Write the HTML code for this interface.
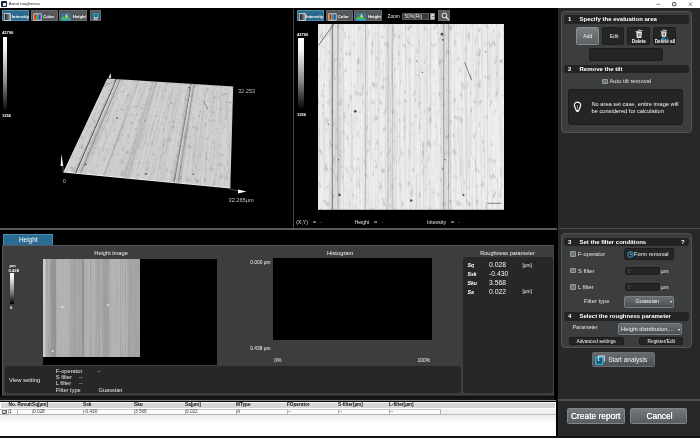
<!DOCTYPE html>
<html lang="en">
<head>
<meta charset="utf-8">
<title>Areal roughness</title>
<style>
*{box-sizing:border-box;margin:0;padding:0}
html,body{width:700px;height:438px;overflow:hidden;background:#000}
body{position:relative;font-family:"Liberation Sans",sans-serif;color:#e6e6e6;font-size:5.5px;line-height:1}
#wrap{position:absolute;left:0;top:0;width:700px;height:438px;will-change:transform}
.a{position:absolute}
.t{position:absolute;white-space:nowrap}
#titlebar{left:0;top:0;width:700px;height:8.3px;background:#fff;color:#333}
.tb{position:absolute;top:10.4px;height:11px;border-radius:0.5px;background:#53575a;border:0.5px solid #666a6c;color:#fff;font-size:4.2px;font-weight:bold}
.tb.sel{background:#2c6a8c;border-color:#4d8fb0}
.tb span{position:absolute;top:3.3px}
#rp{left:557.6px;top:8.3px;width:142.4px;height:430px;background:#282828}
.box{position:absolute;background:#3b3d3e;border:1px solid #515354;border-radius:4px}
.hd{position:absolute;background:#222324;border-radius:3px;height:8.5px;color:#fff;font-weight:bold;font-size:6px}
.hd span{position:absolute;top:1.1px}
.dk{position:absolute;background:#242525;border-radius:2px;border:0.5px solid #1d1d1d}
.btn{position:absolute;border-radius:1.5px;background:linear-gradient(#6a6f71,#4b4f51);border:0.5px solid #7c8082;color:#f2f2f2;text-align:center}
.cb{position:absolute;width:5.5px;height:5.5px;background:#727576;border:0.5px solid #9a9d9e;border-radius:1px}
.lbl{position:absolute;white-space:nowrap;color:#e4e4e4;font-size:5.8px}
</style>
</head>
<body>
<div id="wrap">
<!-- title bar -->
<div id="titlebar" class="a">
  <div class="a" style="left:1px;top:1px;width:6px;height:6px;background:#16223f;border-radius:1px"></div>
  <div class="a" style="left:3px;top:3px;width:3px;height:3px;background:#e8eef8"></div>
  <div class="t" style="left:8.8px;top:1.7px;font-size:4.3px;color:#222">Areal roughness</div>
  <svg class="a" style="left:650px;top:0" width="50" height="8.6" viewBox="0 0 50 8.6"><line x1="6.5" y1="4.3" x2="10" y2="4.3" stroke="#555" stroke-width="0.7"/><rect x="22.6" y="2.6" width="3.2" height="3.2" rx="0.6" fill="none" stroke="#333" stroke-width="0.9"/><path d="M38.8 2.5 L42.2 5.9 M42.2 2.5 L38.8 5.9" stroke="#444" stroke-width="0.7" fill="none"/></svg>
</div>

<!-- vertical divider between 3D and 2D panes -->
<div class="a" style="left:292.5px;top:9px;width:1.5px;height:219px;background:#444"></div>
<!-- horizontal divider under panes -->
<div class="a" style="left:0;top:228.4px;width:557px;height:1.8px;background:#5a5a5a"></div>

<svg class="a" style="left:317.7px;top:24.2px" width="186.4" height="185.8" preserveAspectRatio="none" viewBox="0 0 187 186">
<defs><filter id="nz" x="0" y="0" width="100%" height="100%"><feTurbulence type="fractalNoise" baseFrequency="0.55 0.012" numOctaves="3" seed="3"/><feColorMatrix type="matrix" values="0 0 0 0 0  0 0 0 0 0  0 0 0 0 0  0.2 0 0 0 -0.08"/></filter><filter id="nz2" x="0" y="0" width="100%" height="100%"><feTurbulence type="fractalNoise" baseFrequency="0.28 0.12" numOctaves="2" seed="11"/><feColorMatrix type="matrix" values="0 0 0 0 0  0 0 0 0 0  0 0 0 0 0  0.65 0 0 0 -0.39"/></filter></defs>
<g id="im2d">
<rect width="187" height="186" fill="#efefef"/>
<rect width="187" height="186" filter="url(#nz)"/>
<rect width="187" height="186" filter="url(#nz2)"/>
<rect x="11.2" y="0" width="12.2" height="186" fill="#000" fill-opacity="0.060"/>
<rect x="67.3" y="0" width="10.3" height="186" fill="#000" fill-opacity="0.045"/>
<rect x="122.5" y="0" width="11.2" height="186" fill="#000" fill-opacity="0.060"/>
<rect x="44.9" y="0" width="5.6" height="186" fill="#000" fill-opacity="0.030"/>
<rect x="13.8" y="0" width="1.1" height="186" fill="#000" fill-opacity="0.42"/>
<rect x="19.5" y="0" width="1.0" height="186" fill="#000" fill-opacity="0.22"/>
<rect x="24.8" y="0" width="0.8" height="186" fill="#000" fill-opacity="0.10"/>
<rect x="47.3" y="0" width="0.8" height="186" fill="#000" fill-opacity="0.16"/>
<rect x="69.7" y="0" width="0.9" height="186" fill="#000" fill-opacity="0.16"/>
<rect x="74.4" y="0" width="0.8" height="186" fill="#000" fill-opacity="0.14"/>
<rect x="111.9" y="0" width="0.7" height="186" fill="#000" fill-opacity="0.10"/>
<rect x="125.7" y="0" width="1.0" height="186" fill="#000" fill-opacity="0.28"/>
<rect x="130.5" y="0" width="0.9" height="186" fill="#000" fill-opacity="0.22"/>
<rect x="148.3" y="0" width="0.7" height="186" fill="#000" fill-opacity="0.08"/>
<rect x="169.8" y="0" width="0.7" height="186" fill="#000" fill-opacity="0.08"/>
<rect x="33.4" y="0" width="0.6" height="186" fill="#000" fill-opacity="0.07"/>
<rect x="57.7" y="0" width="0.6" height="186" fill="#000" fill-opacity="0.07"/>
<rect x="87.6" y="0" width="0.6" height="186" fill="#000" fill-opacity="0.07"/>
<rect x="98.8" y="0" width="0.6" height="186" fill="#000" fill-opacity="0.06"/>
<rect x="158.6" y="0" width="0.6" height="186" fill="#000" fill-opacity="0.06"/>
<rect x="60.6" y="0" width="0.6" height="186" fill="#000" fill-opacity="0.05"/>
<rect x="9.0" y="0" width="0.6" height="186" fill="#000" fill-opacity="0.03"/>
<rect x="109.0" y="0" width="0.6" height="186" fill="#000" fill-opacity="0.04"/>
<rect x="16.1" y="0" width="0.6" height="186" fill="#fff" fill-opacity="0.03"/>
<rect x="17.0" y="0" width="0.6" height="186" fill="#fff" fill-opacity="0.03"/>
<rect x="105.7" y="0" width="0.6" height="186" fill="#000" fill-opacity="0.06"/>
<rect x="109.0" y="0" width="0.6" height="186" fill="#000" fill-opacity="0.06"/>
<rect x="74.2" y="0" width="0.6" height="186" fill="#000" fill-opacity="0.03"/>
<rect x="160.5" y="0" width="0.6" height="186" fill="#fff" fill-opacity="0.05"/>
<rect x="101.1" y="0" width="0.6" height="186" fill="#000" fill-opacity="0.05"/>
<rect x="152.6" y="0" width="0.6" height="186" fill="#000" fill-opacity="0.04"/>
<rect x="106.8" y="0" width="0.6" height="186" fill="#000" fill-opacity="0.05"/>
<rect x="102.4" y="0" width="0.6" height="186" fill="#000" fill-opacity="0.06"/>
<rect x="115.8" y="0" width="0.6" height="186" fill="#fff" fill-opacity="0.06"/>
<rect x="80.0" y="0" width="0.6" height="186" fill="#fff" fill-opacity="0.05"/>
<rect x="172.7" y="0" width="0.6" height="186" fill="#fff" fill-opacity="0.04"/>
<rect x="148.5" y="0" width="0.6" height="186" fill="#000" fill-opacity="0.07"/>
<rect x="15.3" y="0" width="0.6" height="186" fill="#fff" fill-opacity="0.06"/>
<rect x="163.7" y="0" width="0.6" height="186" fill="#000" fill-opacity="0.05"/>
<rect x="113.9" y="0" width="0.6" height="186" fill="#000" fill-opacity="0.04"/>
<rect x="78.2" y="0" width="0.6" height="186" fill="#fff" fill-opacity="0.04"/>
<rect x="91.4" y="0" width="0.6" height="186" fill="#000" fill-opacity="0.08"/>
<rect x="14.5" y="0" width="0.6" height="186" fill="#000" fill-opacity="0.06"/>
<rect x="163.7" y="0" width="0.6" height="186" fill="#fff" fill-opacity="0.05"/>
<circle cx="37.4" cy="87.4" r="1.4" fill="#222" fill-opacity="0.75"/>
<circle cx="10.3" cy="100.4" r="0.7" fill="#222" fill-opacity="0.75"/>
<circle cx="21.5" cy="171.1" r="1.3" fill="#222" fill-opacity="0.75"/>
<circle cx="93.5" cy="176.7" r="1.2" fill="#222" fill-opacity="0.75"/>
<circle cx="124.4" cy="10.2" r="1.4" fill="#222" fill-opacity="0.75"/>
<circle cx="125.3" cy="15.8" r="0.9" fill="#222" fill-opacity="0.75"/>
<circle cx="145.9" cy="171.1" r="1.0" fill="#222" fill-opacity="0.75"/>
<circle cx="168.3" cy="27.9" r="0.7" fill="#222" fill-opacity="0.75"/>
<circle cx="99.1" cy="37.2" r="0.6" fill="#222" fill-opacity="0.75"/>
<circle cx="104.7" cy="48.4" r="0.6" fill="#222" fill-opacity="0.75"/>
<circle cx="127.2" cy="135.8" r="0.7" fill="#222" fill-opacity="0.75"/>
<circle cx="125.3" cy="145.1" r="0.6" fill="#222" fill-opacity="0.75"/>
<circle cx="183.3" cy="37.2" r="0.6" fill="#222" fill-opacity="0.75"/>
<circle cx="20.6" cy="135.8" r="0.6" fill="#222" fill-opacity="0.75"/>
<line x1="0" y1="22" x2="16" y2="0" stroke="#444" stroke-width="0.7"/>
<line x1="147" y1="38" x2="154" y2="56" stroke="#666" stroke-width="0.8"/>
</g>
<line x1="170" y1="179.5" x2="184" y2="179.5" stroke="#333" stroke-width="0.6"/>
</svg>
<div class="a" style="left:0;top:0;width:187px;height:186px;transform-origin:0 0;transform:matrix3d(0.623252,0.024765,0,-0.00021445, -0.321110,0.276200,0,-0.00132933, 0,0,1,0, 107.3000,78.4000,0,1)"><svg class="a" style="left:0;top:0" width="187" height="186" viewBox="0 0 187 186"><use href="#im2d"/><rect width="187" height="186" fill="#000" fill-opacity="0.115"/><rect x="13.8" y="0" width="1.1" height="186" fill="#000" fill-opacity="0.46"/><rect x="15.1" y="0" width="1.0" height="186" fill="#fff" fill-opacity="0.60"/><rect x="19.5" y="0" width="1.0" height="186" fill="#000" fill-opacity="0.24"/><rect x="20.7" y="0" width="0.9" height="186" fill="#fff" fill-opacity="0.35"/><rect x="125.7" y="0" width="1.0" height="186" fill="#000" fill-opacity="0.31"/><rect x="126.9" y="0" width="0.9" height="186" fill="#fff" fill-opacity="0.45"/><rect x="130.5" y="0" width="0.9" height="186" fill="#000" fill-opacity="0.24"/><rect x="131.5" y="0" width="0.8" height="186" fill="#fff" fill-opacity="0.35"/><rect x="0" y="184.8" width="187" height="1.2" fill="#fff" fill-opacity="0.8"/><rect x="0" y="0" width="1" height="186" fill="#fff" fill-opacity="0.6"/></svg></div>
<svg class="a" style="left:0;top:9px" width="292" height="219" viewBox="0 9 292 219">
<polygon points="61.5,154 63.2,166 60.6,166" fill="#fff"/><line x1="62.6" y1="165" x2="63.2" y2="172" stroke="#bbb" stroke-width="0.5"/>
<polygon points="246.5,191.6 238,189.6 238,193.6" fill="#fff"/><line x1="230" y1="189" x2="239" y2="191.4" stroke="#999" stroke-width="0.5"/>
<polygon points="111,73 108.5,77.6 110.8,78.2" fill="#fff"/>
<text x="238" y="93.2" font-size="5.6" fill="#bdbdbd" font-family="Liberation Sans, sans-serif">32.253</text>
<text x="62.7" y="183" font-size="5.6" fill="#bdbdbd" font-family="Liberation Sans, sans-serif">0</text>
<text x="228.6" y="202" font-size="5.6" fill="#c8c8c8" font-family="Liberation Sans, sans-serif">32.265µm</text>
</svg>
<!-- left toolbar -->
<div class="tb sel" style="left:2.3px;width:27px">
  <svg class="a" style="left:1px;top:1.5px" width="7" height="8" viewBox="0 0 8 8" preserveAspectRatio="none"><defs><linearGradient id="gi" x1="0" x2="1"><stop offset="0" stop-color="#111"/><stop offset="1" stop-color="#aaa"/></linearGradient></defs><rect x="0.5" y="0.5" width="7" height="7" fill="url(#gi)" stroke="#ddd" stroke-width="0.8"/></svg>
  <span style="left:8.4px">Intensity</span></div>
<div class="tb" style="left:31px;width:27px">
  <svg class="a" style="left:1px;top:1.5px" width="9" height="8" viewBox="0 0 9 8"><rect x="0.5" y="0.5" width="8" height="7" fill="#fff"/><rect x="1.2" y="1.2" width="2.2" height="5.6" fill="#d22"/><rect x="3.4" y="1.2" width="2.2" height="5.6" fill="#2a2"/><rect x="5.6" y="1.2" width="2.2" height="5.6" fill="#24c"/></svg>
  <span style="left:11.3px">Color</span></div>
<div class="tb" style="left:59px;width:28px">
  <svg class="a" style="left:1px;top:1.5px" width="10" height="8" viewBox="0 0 10 8"><rect x="0" y="0" width="10" height="8" fill="#3f6f9f"/><rect x="0" y="5.6" width="10" height="2.4" fill="#2b8fd8"/><polygon points="0,6 2.5,3 4,5 5.5,0.6 7.5,5 10,6 10,6.6 0,6.6" fill="#4fc04e"/><polygon points="4.3,4 5.5,0.6 6.8,4" fill="#f4e63c"/></svg>
  <span style="left:12.9px">Height</span></div>
<div class="tb" style="left:89.7px;width:11.8px">
  <div class="a" style="left:2.4px;top:1.6px;width:5.8px;height:4.9px;background:#2a94b8;border-radius:1px"></div>
  <div class="a" style="left:4px;top:2.8px;width:2.6px;height:2.6px;background:#176a88;border-radius:0.6px"></div>
  <span style="left:2.9px;top:7px;font-size:3.3px;line-height:1">3D</span>
</div>
<!-- left colour scale -->
<div class="t" style="left:2px;top:30.5px;font-size:4.1px;font-weight:bold;color:#fff">42790</div>
<div class="a" style="left:2.5px;top:37px;width:4.5px;height:74px;background:linear-gradient(#fff,#f2f2f2 18%,#8a8a8a 60%,#111 96%,#000)"></div>
<div class="t" style="left:2px;top:113.5px;font-size:4.1px;font-weight:bold;color:#fff">1256</div>

<!-- right toolbar -->
<div class="tb sel" style="left:296.6px;width:27px">
  <svg class="a" style="left:1px;top:1.5px" width="7" height="8" viewBox="0 0 8 8" preserveAspectRatio="none"><rect x="0.5" y="0.5" width="7" height="7" fill="url(#gi)" stroke="#ddd" stroke-width="0.8"/></svg>
  <span style="left:8.4px">Intensity</span></div>
<div class="tb" style="left:325.5px;width:27px">
  <svg class="a" style="left:1px;top:1.5px" width="9" height="8" viewBox="0 0 9 8"><rect x="0.5" y="0.5" width="8" height="7" fill="#fff"/><rect x="1.2" y="1.2" width="2.2" height="5.6" fill="#d22"/><rect x="3.4" y="1.2" width="2.2" height="5.6" fill="#2a2"/><rect x="5.6" y="1.2" width="2.2" height="5.6" fill="#24c"/></svg>
  <span style="left:11.3px">Color</span></div>
<div class="tb" style="left:354px;width:28px">
  <svg class="a" style="left:1px;top:1.5px" width="10" height="8" viewBox="0 0 10 8"><rect x="0" y="0" width="10" height="8" fill="#3f6f9f"/><rect x="0" y="5.6" width="10" height="2.4" fill="#2b8fd8"/><polygon points="0,6 2.5,3 4,5 5.5,0.6 7.5,5 10,6 10,6.6 0,6.6" fill="#4fc04e"/><polygon points="4.3,4 5.5,0.6 6.8,4" fill="#f4e63c"/></svg>
  <span style="left:12.9px">Height</span></div>
<div class="t" style="left:387.5px;top:14.6px;font-size:4.8px;color:#e6e6e6">Zoom</div>
<div class="a" style="left:402px;top:12.5px;width:27px;height:7px;background:#38393a;border:0.5px solid #5a5a5a;color:#f4f4f4;font-size:4.7px"><span class="t" style="left:1.5px;top:1px">50%(Fit)</span></div>
<div class="a" style="left:430px;top:12.5px;width:5px;height:7px;background:#cfd3d6;border:0.5px solid #888"><div class="a" style="left:0.8px;top:2.4px;border-left:1.4px solid transparent;border-right:1.4px solid transparent;border-top:1.8px solid #222"></div></div>
<div class="tb" style="left:438px;width:11.5px">
  <svg class="a" style="left:1.5px;top:1px" width="8.5" height="8.5" viewBox="0 0 8.5 8.5"><circle cx="3.4" cy="3.4" r="2.4" fill="none" stroke="#f2f2f2" stroke-width="1"/><line x1="5.2" y1="5.2" x2="7.8" y2="7.8" stroke="#f2f2f2" stroke-width="1.2"/></svg>
</div>
<!-- right colour scale -->
<div class="t" style="left:297px;top:33.3px;font-size:4.1px;font-weight:bold;color:#fff">42790</div>
<div class="a" style="left:298px;top:38px;width:5.5px;height:71px;background:linear-gradient(#fff,#f2f2f2 18%,#8a8a8a 60%,#111 96%,#000)"></div>
<div class="t" style="left:297px;top:112.5px;font-size:4.1px;font-weight:bold;color:#fff">1256</div>
<!-- status row -->
<div class="t" style="left:296.3px;top:219.6px;font-size:5.1px;color:#e6e6e6">(X,Y)<span style="margin-left:5px">=</span><span style="margin-left:4.5px;color:#888">-</span></div>
<div class="t" style="left:354.5px;top:219.6px;font-size:5.1px;color:#e6e6e6">Height<span style="margin-left:5px">=</span><span style="margin-left:4.5px;color:#888">-</span></div>
<div class="t" style="left:427px;top:219.6px;font-size:5.1px;color:#e6e6e6">Intensity<span style="margin-left:5px">=</span><span style="margin-left:4.5px;color:#888">-</span></div>

<!-- right settings panel -->
<div class="a" id="rp"></div>
<div class="a" style="left:557.6px;top:227.6px;width:142.4px;height:1.5px;background:#484848"></div>
<div class="a" style="left:557.6px;top:399px;width:142.4px;height:1.5px;background:#4c4c4c"></div>

<!-- box 1/2 -->
<div class="box" style="left:560.5px;top:10.5px;width:131.5px;height:122px"></div>
<div class="hd" style="left:564px;top:15px;width:124.5px"><span style="left:4px">1</span><span style="left:15.5px">Specify the evaluation area</span></div>
<div class="btn" style="left:576px;top:26.5px;width:22.5px;height:18.5px;background:linear-gradient(#7a8082,#5c6163);border-color:#8a8e8f"><span class="t" style="left:6.3px;top:6.8px;font-size:5px">Add</span></div>
<div class="dk" style="left:601.5px;top:26.5px;width:22.5px;height:18.5px"><span class="t" style="left:7.3px;top:6.8px;font-size:5px;color:#eee">Edit</span></div>
<div class="dk" style="left:627px;top:26.5px;width:23px;height:18.5px">
  <svg class="a" style="left:7.3px;top:1.8px" width="8" height="9.5" viewBox="0 0 8 9.5"><path d="M1.3 2.8 H6.9 L6.4 9 H1.8 Z" fill="#ececec"/><path d="M0.6 2.2 L7.2 1.1 L7.35 1.9 L0.75 3 Z" fill="#ececec"/><path d="M3 0.9 L5 0.55 L5.1 1.2 L3.1 1.55 Z" fill="#ececec"/><rect x="2.9" y="4" width="0.7" height="3.8" fill="#3a3a3a"/><rect x="4.6" y="4" width="0.7" height="3.8" fill="#3a3a3a"/></svg>
  <span class="t" style="left:3.8px;top:12.6px;font-size:4.7px;font-weight:bold;color:#f2f2f2">Delete</span></div>
<div class="dk" style="left:653px;top:26.5px;width:22.5px;height:18.5px">
  <svg class="a" style="left:6.3px;top:1px" width="10" height="11.5" viewBox="0 0 10 11.5"><g transform="scale(0.95 0.86)"><path d="M1.3 2.8 H6.9 L6.4 9 H1.8 Z" fill="#ececec"/><path d="M0.6 2.2 L7.2 1.1 L7.35 1.9 L0.75 3 Z" fill="#ececec"/><path d="M3 0.9 L5 0.55 L5.1 1.2 L3.1 1.55 Z" fill="#ececec"/><rect x="2.9" y="4" width="0.7" height="3.8" fill="#3a3a3a"/><rect x="4.6" y="4" width="0.7" height="3.8" fill="#3a3a3a"/></g><text x="1.6" y="10.7" font-size="3.7" font-weight="bold" fill="#2fb4e8" font-family="Liberation Sans, sans-serif">ALL</text></svg>
  <span class="t" style="left:0.7px;top:12.6px;font-size:4.7px;font-weight:bold;color:#f2f2f2">Delete all</span></div>
<div class="dk" style="left:588.5px;top:48px;width:74.5px;height:12.5px"></div>
<div class="hd" style="left:564px;top:64.5px;width:124.5px"><span style="left:4px">2</span><span style="left:15.5px">Remove the tilt</span></div>
<div class="cb" style="left:602px;top:78.5px"></div>
<div class="lbl" style="left:609.5px;top:79.4px">Auto tilt removal</div>
<div class="dk" style="left:568px;top:88.7px;width:115px;height:36px;border-radius:3px"></div>
<svg class="a" style="left:572.8px;top:101.3px" width="9" height="12" viewBox="0 0 9 12"><path d="M4.5 1.1 A3.2 3.2 0 0 0 1.9 6.1 L3.3 9.6 L5.7 9.6 L7.1 6.1 A3.2 3.2 0 0 0 4.5 1.1 Z" fill="none" stroke="#f4f4f4" stroke-width="1.25" stroke-linejoin="round"/><path d="M3.4 10.4 H5.6" stroke="#f4f4f4" stroke-width="1.1"/><path d="M4.5 4.2 V7.6" stroke="#cfcfcf" stroke-width="0.6"/></svg>
<div class="lbl" style="left:591.5px;top:101.9px;font-size:5.7px;color:#f0f0f0">No area set case, entire image will</div>
<div class="lbl" style="left:591.5px;top:108.9px;font-size:5.7px;color:#f0f0f0">be considered for calculation</div>

<!-- box 3/4 -->
<div class="box" style="left:560.5px;top:232.5px;width:131.5px;height:115px"></div>
<div class="hd" style="left:564px;top:237.5px;width:124.5px"><span style="left:4px">3</span><span style="left:15.5px">Set the filter conditions</span><span style="left:117px">?</span></div>
<div class="cb" style="left:570px;top:251px"></div>
<div class="lbl" style="left:578px;top:251.9px">F-operator</div>
<div class="dk" style="left:623.5px;top:248.1px;width:50.5px;height:12px">
  <svg class="a" style="left:2px;top:1.8px" width="7" height="7" viewBox="0 0 7 7"><circle cx="3.5" cy="3.5" r="2.7" fill="none" stroke="#2fa6dc" stroke-width="1"/><path d="M3.5 1.8 V3.6 H5" fill="none" stroke="#9bd4ee" stroke-width="0.7"/></svg>
  <span class="t" style="left:9.6px;top:2.6px;font-size:5.6px;color:#f0f0f0">Form removal</span></div>
<div class="cb" style="left:570px;top:267.5px"></div>
<div class="lbl" style="left:578px;top:269.1px">S filter</div>
<div class="dk" style="left:625px;top:266.5px;width:34.5px;height:8.5px"><span class="t" style="left:1.5px;top:1.4px;font-size:5px;color:#555">0</span></div>
<div class="lbl" style="left:660.5px;top:269.1px">µm</div>
<div class="cb" style="left:570px;top:284px"></div>
<div class="lbl" style="left:578px;top:284.9px">L filter</div>
<div class="dk" style="left:625px;top:282.5px;width:34.5px;height:8.5px"><span class="t" style="left:1.5px;top:1.4px;font-size:5px;color:#555">0</span></div>
<div class="lbl" style="left:660.5px;top:284.9px">µm</div>
<div class="lbl" style="left:584px;top:298.9px">Filter type</div>
<div class="btn" style="left:624px;top:296px;width:50px;height:11.5px"><span class="t" style="left:10.5px;top:2.4px;font-size:5.6px">Guassian</span><div class="a" style="left:44.5px;top:4.2px;border-left:1.5px solid transparent;border-right:1.5px solid transparent;border-top:2px solid #fff"></div></div>
<div class="hd" style="left:564px;top:312px;width:124.5px"><span style="left:4px">4</span><span style="left:15.5px">Select the roughness parameter</span></div>
<div class="lbl" style="left:572.5px;top:325.4px;font-size:5.4px">Parameter</div>
<div class="btn" style="left:618px;top:323px;width:64px;height:11.5px"><span class="t" style="left:2px;top:2.8px;font-size:5.8px">Height distribution,...</span><div class="a" style="left:58.5px;top:4.6px;border-left:1.5px solid transparent;border-right:1.5px solid transparent;border-top:2px solid #fff"></div></div>
<div class="dk" style="left:569px;top:337.4px;width:54.5px;height:8px"><span class="t" style="left:6.5px;top:1.3px;font-size:4.8px;color:#f0f0f0">Advanced settings</span></div>
<div class="dk" style="left:639px;top:337.4px;width:43.5px;height:8px"><span class="t" style="left:7.5px;top:1.3px;font-size:4.8px;color:#f0f0f0">Register/Edit</span></div>

<!-- start analysis -->
<div class="btn" style="left:591.7px;top:352px;width:63.8px;height:14.7px;border-color:#6c7072;background:linear-gradient(#666b6d,#4d5153)">
  <svg class="a" style="left:2.5px;top:2px" width="10" height="10" viewBox="0 0 10 10"><rect x="0.8" y="2.4" width="7" height="7" fill="#1b5570" stroke="#2fb0e0" stroke-width="1.4"/><path d="M3.4 5.4 V1 H9.3 V6.6" fill="none" stroke="#e8f6fc" stroke-width="0.9"/><rect x="3" y="4.8" width="1.2" height="1.2" fill="#fff"/></svg>
  <span class="t" style="left:15.5px;top:3.8px;font-size:6.5px">Start analysis</span></div>
<!-- bottom buttons -->
<div class="btn" style="left:567px;top:407.5px;width:57.5px;height:16px;background:linear-gradient(#74797c,#575c5e);border-color:#80858a"><span class="t" style="left:3px;top:3.4px;font-size:8.4px;color:#fff;text-shadow:0 0 0.5px #fff">Create report</span></div>
<div class="btn" style="left:629.5px;top:407.5px;width:57.5px;height:16px;background:linear-gradient(#74797c,#575c5e);border-color:#80858a"><span class="t" style="left:16px;top:3.4px;font-size:8.4px;color:#fff;text-shadow:0 0 0.5px #fff">Cancel</span></div>

<!-- lower panel -->
<div class="a" style="left:3px;top:233.6px;width:49.5px;height:11px;background:#2b6d92;border:0.5px solid #4a8db2;border-bottom:none"><span class="t" style="left:15px;top:2.2px;font-size:6.4px;color:#fff">Height</span></div>
<div class="a" style="left:2px;top:245.4px;width:551.5px;height:151px;background:#3c3d3f;border:1px solid #565859;border-bottom-color:#333;border-right-color:#444"></div>
<div class="t" style="left:94.3px;top:251.2px;font-size:5.7px;color:#f0f0f0">Height image</div>
<div class="a" style="left:43px;top:259px;width:173.5px;height:105.5px;background:#000"></div>
<!-- colour scale -->
<div class="t" style="left:9.5px;top:264.2px;font-size:4.2px;font-weight:bold;color:#fff">µm</div>
<div class="t" style="left:8.5px;top:268.7px;font-size:4.2px;font-weight:bold;color:#fff">0.438</div>
<div class="a" style="left:9.5px;top:273px;width:4.5px;height:31px;background:linear-gradient(#fff,#f0f0f0 15%,#888 60%,#111 95%,#000)"></div>
<div class="t" style="left:10px;top:306.2px;font-size:4.2px;font-weight:bold;color:#fff">0</div>
<!-- histogram -->
<div class="t" style="left:327px;top:251.2px;font-size:5.8px;color:#f0f0f0">Histogram</div>
<div class="a" style="left:273px;top:258px;width:159px;height:81.5px;background:#000"></div>
<div class="t" style="left:250.3px;top:261.3px;font-size:4.8px;color:#f4f4f4">0.000 µm</div>
<div class="t" style="left:250.3px;top:347.4px;font-size:4.8px;color:#f4f4f4">0.438 µm</div>
<div class="t" style="left:274.3px;top:358px;font-size:5px;color:#f4f4f4">0%</div>
<div class="t" style="left:417.5px;top:358px;font-size:5px;color:#f4f4f4">100%</div>
<!-- view setting -->
<div class="a" style="left:5px;top:365.5px;width:455.5px;height:27.5px;background:#262727;border-radius:3px"></div>
<div class="t" style="left:9px;top:378.4px;font-size:5.8px;color:#e8e8e8">View setting</div>
<div class="t" style="left:55.8px;top:368.6px;font-size:5.7px;color:#e8e8e8">F-operator</div><div class="t" style="left:97px;top:368.6px;font-size:5.7px;color:#bbb">--</div>
<div class="t" style="left:55.8px;top:374.9px;font-size:5.7px;color:#e8e8e8">S filter</div><div class="t" style="left:79px;top:374.9px;font-size:5.7px;color:#bbb">--</div>
<div class="t" style="left:55.8px;top:381.2px;font-size:5.7px;color:#e8e8e8">L filter</div><div class="t" style="left:79px;top:381.2px;font-size:5.7px;color:#bbb">--</div>
<div class="t" style="left:55.8px;top:387.5px;font-size:5.7px;color:#e8e8e8">Filter type</div><div class="t" style="left:98.5px;top:387.5px;font-size:5.7px;color:#e8e8e8">Guassian</div>
<!-- roughness parameter -->
<div class="t" style="left:480.3px;top:251.2px;font-size:5.5px;color:#f0f0f0">Roughness parameter</div>
<div class="a" style="left:463px;top:257px;width:89.5px;height:136px;background:#262727;border-radius:3px"></div>
<div class="t" style="left:467.5px;top:263.3px;font-size:5.2px;font-style:italic;font-weight:bold;color:#fff">Sq</div><div class="t" style="left:489px;top:262.3px;font-size:6.8px;color:#f4f4f4">0.028</div><div class="t" style="left:522.5px;top:263.5px;font-size:4.8px;color:#eee">[µm]</div>
<div class="t" style="left:467.5px;top:272px;font-size:5.2px;font-style:italic;font-weight:bold;color:#fff">Ssk</div><div class="t" style="left:489px;top:271px;font-size:6.8px;color:#f4f4f4">-0.430</div>
<div class="t" style="left:467.5px;top:280.8px;font-size:5.2px;font-style:italic;font-weight:bold;color:#fff">Sku</div><div class="t" style="left:489px;top:279.8px;font-size:6.8px;color:#f4f4f4">3.568</div>
<div class="t" style="left:467.5px;top:289.5px;font-size:5.2px;font-style:italic;font-weight:bold;color:#fff">Sa</div><div class="t" style="left:489px;top:288.5px;font-size:6.8px;color:#f4f4f4">0.022</div><div class="t" style="left:522.5px;top:289.7px;font-size:4.8px;color:#eee">[µm]</div>

<!-- result table -->
<div class="a" style="left:0;top:396.4px;width:557.6px;height:4px;background:linear-gradient(#0c0c0c,#1e1e1e)"></div>
<div class="a" style="left:0;top:400.2px;width:555.8px;height:1.3px;background:#8a8a8a"></div>
<div class="a" style="left:0;top:401.5px;width:555.8px;height:34px;background:#fff"></div>
<div class="a" style="left:1px;top:402.8px;width:553.8px;height:5.7px;background:#d6d6d6"></div>
<div class="a" style="left:0;top:408.5px;width:440px;height:6.5px;background:#fbfbfb;border-top:0.5px solid #c4c4c4;border-bottom:0.5px solid #b4b4b4"></div>
<div class="a" style="left:440px;top:408.5px;width:115.8px;height:6.5px;background:#f0f0f0;border-bottom:0.5px solid #bbb"></div>
<div class="a" style="left:0;top:415px;width:555.8px;height:6.5px;background:linear-gradient(#ececec,#fafafa)"></div>
<div id="tbl" style="font-size:4.7px;color:#111">
<div class="t" style="left:8.6px;top:403px;font-weight:bold">No.</div>
<div class="t" style="left:17.6px;top:403px;font-weight:bold">Result</div>
<div class="t" style="left:32px;top:403px;font-weight:bold">Sq[µm]</div>
<div class="t" style="left:83px;top:403px;font-weight:bold">Ssk</div>
<div class="t" style="left:134px;top:403px;font-weight:bold">Sku</div>
<div class="t" style="left:185px;top:403px;font-weight:bold">Sa[µm]</div>
<div class="t" style="left:236px;top:403px;font-weight:bold">MType</div>
<div class="t" style="left:287px;top:403px;font-weight:bold">FOperator</div>
<div class="t" style="left:338px;top:403px;font-weight:bold">S-filter[µm]</div>
<div class="t" style="left:389px;top:403px;font-weight:bold">L-filter[µm]</div>
<div class="a" style="left:2px;top:409.8px;width:4.5px;height:4.5px;border:0.5px solid #777;background:#fff"></div>
<svg class="a" style="left:2.2px;top:409.6px" width="5" height="5" viewBox="0 0 5 5"><path d="M0.8 2.4 L2 3.8 L4.3 0.7" fill="none" stroke="#222" stroke-width="0.7"/></svg>
<div class="t" style="left:9px;top:409.6px">1</div>
<div class="t" style="left:33px;top:409.6px;color:#444">0.028</div>
<div class="t" style="left:84px;top:409.6px;color:#444">-0.430</div>
<div class="t" style="left:135px;top:409.6px;color:#444">3.568</div>
<div class="t" style="left:186px;top:409.6px;color:#444">0.022</div>
<div class="t" style="left:237px;top:409.6px;color:#444">A</div>
<div class="t" style="left:288px;top:409.6px;color:#444">--</div>
<div class="t" style="left:339px;top:409.6px;color:#444">--</div>
<div class="t" style="left:390px;top:409.6px;color:#444">--</div>
</div>

<svg class="a" style="left:43px;top:259px" width="97" height="98" viewBox="0 0 97 98">
<rect width="97" height="98" fill="#b0b0b0"/>
<rect width="97" height="98" filter="url(#nz)"/>
<rect x="0.0" y="0" width="2.4" height="98" fill="#d4d4d4" fill-opacity="0.80"/>
<rect x="7.8" y="0" width="5.3" height="98" fill="#808080" fill-opacity="0.55"/>
<rect x="13.6" y="0" width="12.6" height="98" fill="#bcbcbc" fill-opacity="0.40"/>
<rect x="27.2" y="0" width="11.6" height="98" fill="#9c9c9c" fill-opacity="0.40"/>
<rect x="39.3" y="0" width="1.9" height="98" fill="#7c7c7c" fill-opacity="0.60"/>
<rect x="41.7" y="0" width="16.5" height="98" fill="#b8b8b8" fill-opacity="0.30"/>
<rect x="60.1" y="0" width="5.8" height="98" fill="#909090" fill-opacity="0.45"/>
<rect x="67.9" y="0" width="14.5" height="98" fill="#bcbcbc" fill-opacity="0.35"/>
<rect x="85.4" y="0" width="11.6" height="98" fill="#989898" fill-opacity="0.45"/>
<rect x="31.4" y="0" width="0.6" height="98" fill="#000" fill-opacity="0.08"/>
<rect x="4.7" y="0" width="0.6" height="98" fill="#000" fill-opacity="0.06"/>
<rect x="56.5" y="0" width="0.6" height="98" fill="#000" fill-opacity="0.07"/>
<rect x="8.3" y="0" width="0.6" height="98" fill="#fff" fill-opacity="0.05"/>
<rect x="8.8" y="0" width="0.6" height="98" fill="#fff" fill-opacity="0.05"/>
<rect x="54.8" y="0" width="0.6" height="98" fill="#000" fill-opacity="0.10"/>
<rect x="56.6" y="0" width="0.6" height="98" fill="#000" fill-opacity="0.09"/>
<rect x="38.5" y="0" width="0.6" height="98" fill="#000" fill-opacity="0.05"/>
<rect x="83.3" y="0" width="0.6" height="98" fill="#fff" fill-opacity="0.08"/>
<rect x="52.4" y="0" width="0.6" height="98" fill="#000" fill-opacity="0.07"/>
<rect x="79.2" y="0" width="0.6" height="98" fill="#000" fill-opacity="0.06"/>
<rect x="55.4" y="0" width="0.6" height="98" fill="#000" fill-opacity="0.08"/>
<rect x="53.1" y="0" width="0.6" height="98" fill="#000" fill-opacity="0.09"/>
<rect x="60.0" y="0" width="0.6" height="98" fill="#fff" fill-opacity="0.10"/>
<rect x="41.5" y="0" width="0.6" height="98" fill="#fff" fill-opacity="0.09"/>
<rect x="89.6" y="0" width="0.6" height="98" fill="#fff" fill-opacity="0.07"/>
<rect x="77.1" y="0" width="0.6" height="98" fill="#000" fill-opacity="0.11"/>
<rect x="7.9" y="0" width="0.6" height="98" fill="#fff" fill-opacity="0.09"/>
<rect x="84.9" y="0" width="0.6" height="98" fill="#000" fill-opacity="0.08"/>
<rect x="59.1" y="0" width="0.6" height="98" fill="#000" fill-opacity="0.06"/>
<rect x="40.6" y="0" width="0.6" height="98" fill="#fff" fill-opacity="0.06"/>
<rect x="47.4" y="0" width="0.6" height="98" fill="#000" fill-opacity="0.12"/>
<rect x="7.5" y="0" width="0.6" height="98" fill="#000" fill-opacity="0.09"/>
<rect x="84.9" y="0" width="0.6" height="98" fill="#fff" fill-opacity="0.08"/>
<circle cx="19.4" cy="48.0" r="0.9" fill="#f4f4f4"/>
<circle cx="65.0" cy="46.1" r="0.9" fill="#f4f4f4"/>
<circle cx="9.7" cy="92.1" r="0.9" fill="#f4f4f4"/>
</svg>
<div class="a" style="left:8.0px;top:408.5px;width:0.5px;height:6.5px;background:#b4b4b4"></div>
<div class="a" style="left:17.0px;top:408.5px;width:0.5px;height:6.5px;background:#b4b4b4"></div>
<div class="a" style="left:31.5px;top:408.5px;width:0.5px;height:6.5px;background:#b4b4b4"></div>
<div class="a" style="left:82.5px;top:408.5px;width:0.5px;height:6.5px;background:#b4b4b4"></div>
<div class="a" style="left:133.5px;top:408.5px;width:0.5px;height:6.5px;background:#b4b4b4"></div>
<div class="a" style="left:184.5px;top:408.5px;width:0.5px;height:6.5px;background:#b4b4b4"></div>
<div class="a" style="left:235.5px;top:408.5px;width:0.5px;height:6.5px;background:#b4b4b4"></div>
<div class="a" style="left:286.5px;top:408.5px;width:0.5px;height:6.5px;background:#b4b4b4"></div>
<div class="a" style="left:337.5px;top:408.5px;width:0.5px;height:6.5px;background:#b4b4b4"></div>
<div class="a" style="left:388.5px;top:408.5px;width:0.5px;height:6.5px;background:#b4b4b4"></div>
<div class="a" style="left:439.5px;top:408.5px;width:0.5px;height:6.5px;background:#b4b4b4"></div>
<div class="a" style="left:0;top:436.2px;width:700px;height:1.8px;background:#111"></div>
<div class="a" style="left:553.5px;top:230px;width:3.5px;height:170px;background:#000"></div>
</div>
</body>
</html>
